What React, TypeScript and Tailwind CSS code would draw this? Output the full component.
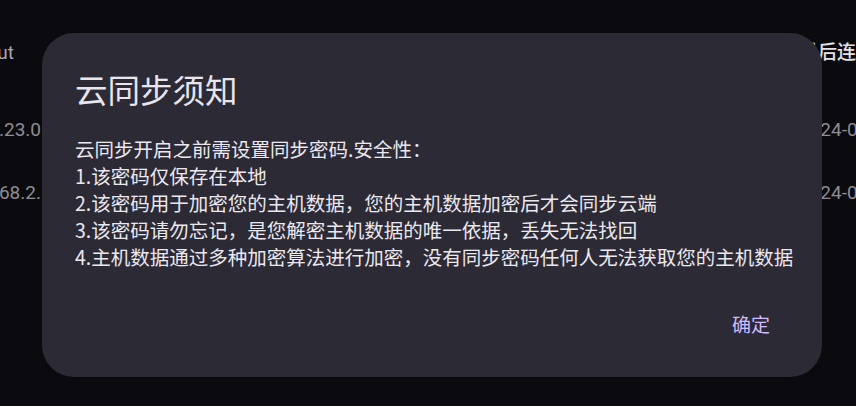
import React from "react";

export default function App() {
  const bgFont = { fontFamily: 'Roboto, "Noto Sans CJK SC", sans-serif' };
  const cjk = { fontFamily: '"Noto Sans CJK SC", "Noto Sans", sans-serif' };
  return (
    <div
      className="relative w-[856px] h-[406px] overflow-hidden bg-[#0b0a0e] text-[19px]"
      style={bgFont}
    >
      {/* background table */}
      <div className="flex flex-col pt-[40px]">
        <div className="flex h-[26px] items-center justify-between">
          <div className="flex w-[14px] justify-end overflow-hidden whitespace-nowrap text-[#a9a7ad]">Layout</div>
          <div className="w-[57px] overflow-hidden whitespace-nowrap text-[#e4e2e8] font-medium">最后连接时间</div>
        </div>
        <div className="flex h-[26px] items-center justify-between mt-[51px]">
          <div className="flex w-[41px] justify-end overflow-hidden whitespace-nowrap text-[#8f8d93]">192.168.23.0</div>
          <div className="w-[57px] overflow-hidden whitespace-nowrap text-[#8f8d93]">2024-01-10</div>
        </div>
        <div className="flex h-[26px] items-center justify-between mt-[37px]">
          <div className="flex w-[41px] justify-end overflow-hidden whitespace-nowrap text-[#8f8d93]">192.168.2.</div>
          <div className="w-[57px] overflow-hidden whitespace-nowrap text-[#8f8d93]">2024-01-10</div>
        </div>
      </div>

      {/* dialog */}
      <div
        className="absolute left-[42px] top-[33px] w-[780px] h-[344px] rounded-[32px] bg-[#2c2a35] pl-[33px] pr-[36px] pt-[35px] flex flex-col"
        style={cjk}
      >
        <div className="text-[32.5px] leading-[42px] text-[#e8e5ec]">云同步须知</div>
        <div className="mt-[25px] text-[19.5px] leading-[27px] text-[#ebe8ef] whitespace-nowrap">
          <div>云同步开启之前需设置同步密码.安全性：</div>
          <div>1.该密码仅保存在本地</div>
          <div>2.该密码用于加密您的主机数据，您的主机数据加密后才会同步云端</div>
          <div>3.该密码请勿忘记，是您解密主机数据的唯一依据，丢失无法找回</div>
          <div>4.主机数据通过多种加密算法进行加密，没有同步密码任何人无法获取您的主机数据</div>
        </div>
        <div className="mt-[27px] flex justify-end">
          <button className="h-[54px] px-[16px] rounded-full text-[19px] text-[#d0bcff]">确定</button>
        </div>
      </div>
    </div>
  );
}
